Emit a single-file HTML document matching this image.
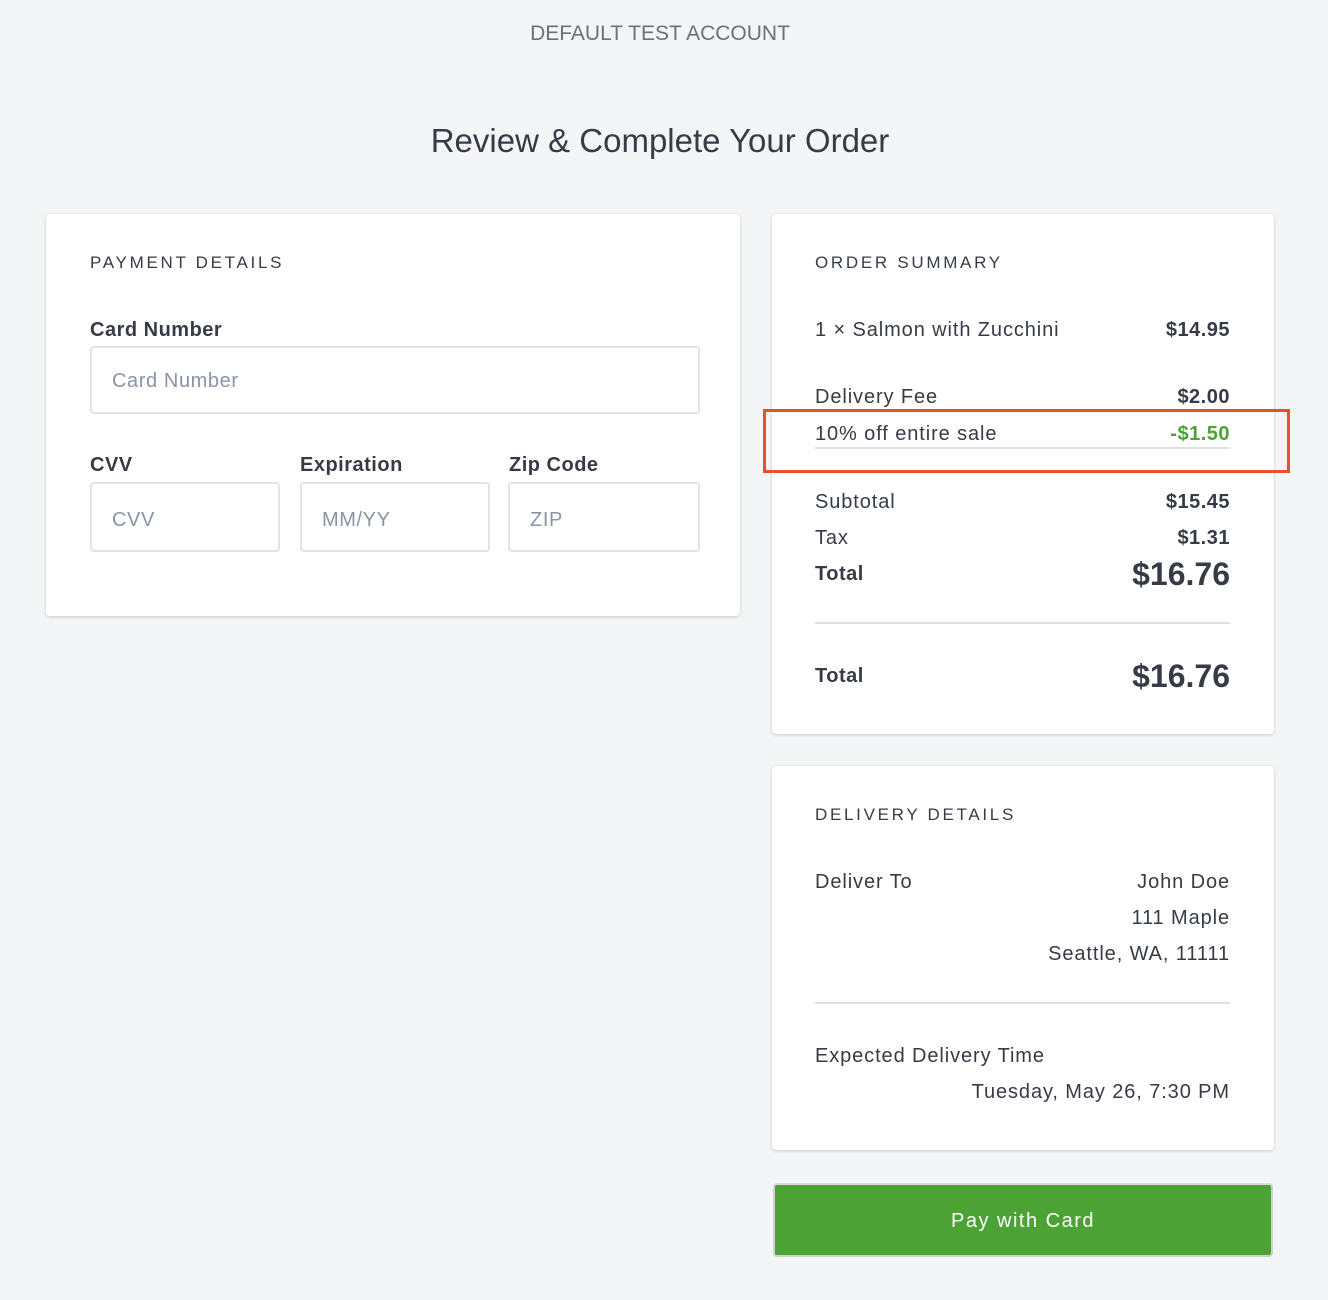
<!DOCTYPE html>
<html><head><meta charset="utf-8"><style>
*{margin:0;padding:0;box-sizing:border-box}
body{width:1328px;height:1300px;background:#f4f5f7;font-family:"Liberation Sans",sans-serif;color:#363b45;position:relative;overflow:hidden}
.a{position:absolute;white-space:nowrap;line-height:24px}
.card{position:absolute;background:#fff;border-radius:4px;box-shadow:0 1px 3px rgba(0,0,0,.18)}
.h{font-size:17px;letter-spacing:2.7px;color:#363b45}
.t{font-size:20px;letter-spacing:0.9px}
.b{font-weight:bold;letter-spacing:0.5px}
.r{text-align:right}
.inp{position:absolute;border:2px solid #e2e3e5;border-radius:4px;background:#fff;font-size:20px;letter-spacing:0.6px;color:#8a94a6;line-height:24px}
.line{position:absolute;height:2px;background:#dcdfe3}
</style></head><body>
<div class="a" style="left:0;width:1320px;top:22px;text-align:center;font-size:21px;color:#6c7077">DEFAULT TEST ACCOUNT</div>
<div class="a" style="left:0;width:1320px;top:122px;line-height:38px;text-align:center;font-size:33px;color:#363b45">Review &amp; Complete Your Order</div>

<div class="card" style="left:46px;top:214px;width:694px;height:402px"></div>
<div class="a h" style="left:90px;top:251px">PAYMENT DETAILS</div>
<div class="a t b" style="left:90px;top:318px">Card Number</div>
<div class="inp" style="left:90px;top:346px;width:610px;height:68px;padding:21px 0 0 20px">Card Number</div>
<div class="a t b" style="left:90px;top:453px">CVV</div>
<div class="a t b" style="left:300px;top:453px">Expiration</div>
<div class="a t b" style="left:509px;top:453px">Zip Code</div>
<div class="inp" style="left:90px;top:482px;width:190px;height:70px;padding:24px 0 0 20px">CVV</div>
<div class="inp" style="left:300px;top:482px;width:190px;height:70px;padding:24px 0 0 20px">MM/YY</div>
<div class="inp" style="left:508px;top:482px;width:192px;height:70px;padding:24px 0 0 20px">ZIP</div>

<div class="card" style="left:772px;top:214px;width:502px;height:520px"></div>
<div class="a h" style="left:815px;top:251px">ORDER SUMMARY</div>
<div class="a t" style="left:815px;top:318px">1 × Salmon with Zucchini</div>
<div class="a t b r" style="left:1030px;width:200px;top:318px">$14.95</div>
<div class="a t" style="left:815px;top:385px">Delivery Fee</div>
<div class="a t b r" style="left:1030px;width:200px;top:385px">$2.00</div>
<div class="a t" style="left:815px;top:422px">10% off entire sale</div>
<div class="a t b r" style="left:1030px;width:200px;top:422px;color:#4ca235">-$1.50</div>
<div class="line" style="left:815px;top:447px;width:415px"></div>
<div style="position:absolute;left:763px;top:409px;width:527px;height:64px;border:3px solid #e9502d"></div>
<div class="a t" style="left:815px;top:490px">Subtotal</div>
<div class="a t b r" style="left:1030px;width:200px;top:490px">$15.45</div>
<div class="a t" style="left:815px;top:526px">Tax</div>
<div class="a t b r" style="left:1030px;width:200px;top:526px">$1.31</div>
<div class="a t b" style="left:815px;top:562px">Total</div>
<div class="a b r" style="left:1030px;width:200px;top:556px;font-size:32px;line-height:36px;letter-spacing:0">$16.76</div>
<div class="line" style="left:815px;top:622px;width:415px"></div>
<div class="a t b" style="left:815px;top:664px">Total</div>
<div class="a b r" style="left:1030px;width:200px;top:658px;font-size:32px;line-height:36px;letter-spacing:0">$16.76</div>

<div class="card" style="left:772px;top:766px;width:502px;height:384px"></div>
<div class="a h" style="left:815px;top:803px">DELIVERY DETAILS</div>
<div class="a t" style="left:815px;top:870px">Deliver To</div>
<div class="a t r" style="left:960px;width:270px;top:870px">John Doe</div>
<div class="a t r" style="left:960px;width:270px;top:906px">111 Maple</div>
<div class="a t r" style="left:960px;width:270px;top:942px">Seattle, WA, 11111</div>
<div class="line" style="left:815px;top:1002px;width:415px"></div>
<div class="a t" style="left:815px;top:1044px">Expected Delivery Time</div>
<div class="a t r" style="left:880px;width:350px;top:1080px">Tuesday, May 26, 7:30 PM</div>

<div style="position:absolute;left:773px;top:1183px;width:500px;height:74px;background:#4ca235;border:2px solid #cfd1d3;border-top-color:#d8dadc;border-radius:4px;color:#fff;font-size:20px;letter-spacing:1.5px;text-align:center;line-height:72px">Pay with Card</div>
</body></html>
